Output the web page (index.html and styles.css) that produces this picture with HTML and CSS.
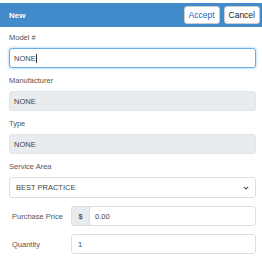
FILE: index.html
```html
<!DOCTYPE html>
<html>
<head>
<meta charset="utf-8">
<link rel="stylesheet" href="styles.css">
</head>
<body>
<div class="panel">
  <div class="header">
    <span class="title">New</span>
    <div class="actions">
      <button class="btn btn-accept">Accept</button>
      <button class="btn">Cancel</button>
    </div>
  </div>
  <div class="form">
    <div class="group">
      <div class="label">Model #</div>
      <div class="field focus">NONE<span class="caret"></span></div>
    </div>
    <div class="group">
      <div class="label">Manufacturer</div>
      <div class="field disabled">NONE</div>
    </div>
    <div class="group">
      <div class="label">Type</div>
      <div class="field disabled">NONE</div>
    </div>
    <div class="group">
      <div class="label">Service Area</div>
      <div class="field select">
        <span>BEST PRACTICE</span>
        <svg class="chev" width="6" height="4" viewBox="0 0 6 4"><path d="M0.8 0.8 L3 3 L5.2 0.8" fill="none" stroke="#555" stroke-width="1.1"/></svg>
      </div>
    </div>
    <div class="row first">
      <div class="row-label">Purchase Price</div>
      <div class="input-group">
        <div class="addon">$</div>
        <div class="field joined">0.00</div>
      </div>
    </div>
    <div class="row">
      <div class="row-label">Quantity</div>
      <div class="field grow">1</div>
    </div>
  </div>
</div>
</body>
</html>
```
FILE: styles.css
```css
* { box-sizing: border-box; }
body {
  margin: 0;
  background: #fff;
  font-family: "Liberation Sans", Arial, sans-serif;
  color: #555;
}
.panel { padding-top: 3px; }
.header {
  height: 24px;
  background: #428bca;
  display: flex;
  align-items: center;
  justify-content: space-between;
  padding: 0 2px 0 9px;
}
.title {
  color: #fff;
  font-weight: bold;
  font-size: 8px;
}
.actions { display: flex; gap: 4px; }
.btn {
  height: 18px;
  padding: 0 4px;
  border: 1px solid #ccc;
  border-radius: 3px;
  background: #fff;
  font-family: "Liberation Sans", Arial, sans-serif;
  font-size: 8.5px;
  color: #222;
}
.btn.btn-accept { color: #1a66c2; }
.form { padding: 5px 6px 0 9px; }
.group { margin-bottom: 7px; }
.label {
  height: 12px;
  line-height: 12px;
  font-size: 7.5px;
  color: #555;
  margin-bottom: 4px;
}
.field {
  height: 20px;
  border: 1px solid #ddd;
  border-radius: 3px;
  background: #fff;
  font-size: 7.5px;
  color: #444;
  display: flex;
  align-items: center;
  padding: 0 4px;
}
.focus {
  border-color: #66afe9;
  box-shadow: 0 0 3px rgba(102, 175, 233, 0.7);
}
.caret {
  display: inline-block;
  width: 1px;
  height: 9px;
  background: #333;
}
.disabled {
  background: #e9ecef;
  border-color: #e2e5e8;
}
.select {
  justify-content: space-between;
  padding: 0 4px 0 6px;
  height: 21px;
}
.chev { margin-right: 2px; }
.row {
  display: flex;
  align-items: center;
  padding-left: 3px;
  margin-bottom: 8px;
}
.row.first { margin-top: 8px; }
.row-label {
  width: 59px;
  font-size: 7.5px;
  color: #555;
}
.input-group { flex: 1; display: flex; }
.addon {
  width: 18px;
  height: 20px;
  background: #e9ecef;
  border: 1px solid #ddd;
  border-right: none;
  border-radius: 3px 0 0 3px;
  display: flex;
  align-items: center;
  justify-content: center;
  font-size: 7.5px;
  font-weight: bold;
  color: #555;
}
.joined {
  flex: 1;
  border-radius: 0 3px 3px 0;
  padding-left: 5px;
}
.grow { flex: 1; padding-left: 6px; }
```
